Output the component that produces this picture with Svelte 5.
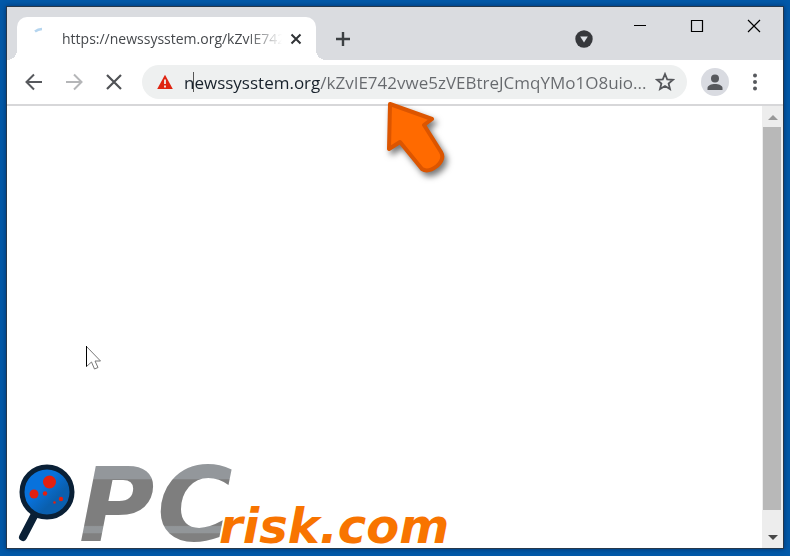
<script>
    let tabTitle = 'https://newssysstem.org/kZvIE742';
    let address = $state('newssysstem.org/kZvIE742vwe5zVEBtreJCmqYMo1O8uio...');
</script>

<div class="desktop">
    <div class="window">
        <header class="tabStrip">
            <div class="tab">
                <svg class="spinner" width="18" height="18" viewBox="0 0 18 18">
                    <path d="M4 5.5Q7 3.2 11 3" fill="none" stroke="#b5d5ef" stroke-width="2.5" />
                </svg>
                <span class="title">{tabTitle}</span>
                <button aria-label="Close tab">
                    <svg width="12" height="12" viewBox="0 0 12 12">
                        <path d="M1.5 1.5l9 9M10.5 1.5l-9 9" stroke="#303336" stroke-width="2" />
                    </svg>
                </button>
            </div>
            <button class="newTab" aria-label="New tab">
                <svg width="16" height="16" viewBox="0 0 16 16">
                    <path d="M8 1v14M1 8h14" stroke="#3c4043" stroke-width="2.4" />
                </svg>
            </button>
            <button class="tabSearch" aria-label="Search tabs">
                <svg width="18" height="18" viewBox="0 0 18 18">
                    <circle cx="9" cy="9" r="8.7" fill="#36383c" />
                    <path d="M5.2 6.5h7.6L9 12.5z" fill="#dee1e6" />
                </svg>
            </button>
            <div class="windowButtons">
                <button aria-label="Minimize">
                    <svg width="14" height="14" viewBox="0 0 14 14"><path d="M1 6.5h12" stroke="#000" /></svg>
                </button>
                <button aria-label="Maximize">
                    <svg width="14" height="14" viewBox="0 0 14 14">
                        <path d="M1.5 1.5h11v11h-11z" fill="none" stroke="#000" stroke-width="1.2" />
                    </svg>
                </button>
                <button aria-label="Close">
                    <svg width="14" height="14" viewBox="0 0 14 14">
                        <path d="M1 1l12 12M13 1L1 13" stroke="#000" stroke-width="1.2" />
                    </svg>
                </button>
            </div>
        </header>

        <nav class="toolbar">
            <div class="navButtons">
                <button aria-label="Back">
                    <svg width="18" height="18" viewBox="0 0 18 18">
                        <path d="M17 9H2M9 1.5L1.5 9 9 16.5" fill="none" stroke="#57595d" stroke-width="2" />
                    </svg>
                </button>
                <button aria-label="Forward">
                    <svg width="18" height="18" viewBox="0 0 18 18">
                        <path d="M1 9h15M9 1.5L16.5 9 9 16.5" fill="none" stroke="#b5b6b8" stroke-width="2" />
                    </svg>
                </button>
                <button aria-label="Stop">
                    <svg width="18" height="18" viewBox="0 0 18 18">
                        <path d="M2 2l14 14M16 2L2 16" stroke="#505256" stroke-width="2.2" />
                    </svg>
                </button>
            </div>
            <div class="omnibox">
                <svg width="16" height="16" viewBox="0 0 16 16">
                    <path d="M8 .8L15.8 15H.2z" fill="#df2411" />
                    <path d="M8 5.5v4.5M8 11.5v2" stroke="#eff1f1" stroke-width="1.8" />
                </svg>
                <div class="field">
                    <input type="text" aria-label="Address" spellcheck="false" bind:value={address} />
                    <i class="caret"></i>
                </div>
                <button aria-label="Bookmark this page">
                    <svg width="20" height="20" viewBox="0 0 20 20">
                        <path d="M10 2l2.2 5.3 5.8.5-4.4 3.7 1.4 5.5-5-3-5 3 1.4-5.5L2 7.8l5.8-.5z" fill="none" stroke="#55575b" stroke-width="1.8" />
                    </svg>
                </button>
            </div>
            <button aria-label="Profile">
                <svg width="28" height="28" viewBox="0 0 28 28">
                    <circle cx="14" cy="14" r="14" fill="#d9dbe1" />
                    <circle cx="14" cy="10.5" r="4" fill="#57595d" />
                    <path d="M6.5 22v-2c0-2.5 4-4 7.5-4s7.5 1.5 7.5 4v2z" fill="#57595d" />
                </svg>
            </button>
            <button aria-label="Menu">
                <svg width="16" height="20" viewBox="0 0 16 20">
                    <g fill="#57595d">
                        <circle cx="8" cy="3.5" r="2" />
                        <circle cx="8" cy="10" r="2" />
                        <circle cx="8" cy="16.5" r="2" />
                    </g>
                </svg>
            </button>
        </nav>

        <main>
            <div class="page">
                <svg class="logo" width="450" height="92" viewBox="0 0 450 92">
                    <defs>
                        <linearGradient id="steel" x1="0" y1="0" x2="0" y2="1">
                            <stop offset=".28" stop-color="#93979b" />
                            <stop offset=".29" stop-color="#7e7e7e" />
                            <stop offset=".67" stop-color="#7e7e7e" />
                            <stop offset=".68" stop-color="#929699" />
                            <stop offset=".73" stop-color="#929699" />
                            <stop offset=".74" stop-color="#808080" />
                        </linearGradient>
                        <linearGradient id="lens" x1="0" y1="0" x2="1" y2="1">
                            <stop offset=".4" stop-color="#0872dc" />
                            <stop offset=".65" stop-color="#0a5fae" />
                        </linearGradient>
                    </defs>
                    <path d="M28 58L16 81" stroke="#0a2036" stroke-width="8" stroke-linecap="round" />
                    <circle cx="40" cy="36" r="25" fill="url(#lens)" stroke="#0a2036" stroke-width="5" />
                    <g fill="#e3200f">
                        <circle cx="42.5" cy="26" r="6.5" />
                        <circle cx="27" cy="38" r="4.5" />
                        <circle cx="38" cy="37.5" r="2.2" />
                        <circle cx="54" cy="43" r="2.2" />
                        <circle cx="47.5" cy="46.5" r="1.3" />
                    </g>
                    <text class="pc" y="85"><tspan x="72">P</tspan><tspan x="150">C</tspan></text>
                    <text class="risk" x="212" y="87">risk.com</text>
                </svg>
            </div>
            <div class="scrollbar">
                <button aria-label="Scroll up">
                    <svg width="10" height="6" viewBox="0 0 10 6"><path d="M0 6l5-5 5 5z" fill="#999" /></svg>
                </button>
                <div class="track"><div class="thumb"></div></div>
                <button aria-label="Scroll down">
                    <svg width="10" height="6" viewBox="0 0 10 6"><path d="M0 0h10L5 5z" fill="#484848" /></svg>
                </button>
            </div>
        </main>

        <svg class="pointer" width="72" height="88" viewBox="0 0 72 88">
            <path d="M10 7L52 22 44 28 61 55Q65 62 57 69 48 76 42 72L20 45 9 52z" fill="#ff6a00" stroke="#dc5500" stroke-width="4" stroke-linejoin="round" />
        </svg>
        <svg class="cursor" width="18" height="26" viewBox="0 0 18 26">
            <path d="M1.5 1.5v20l5-4.5 3 7 3.5-1.5-3-6.5h5.5z" fill="#fff" stroke="#777" />
            <path d="M1.5 1v20.5" stroke="#000" />
        </svg>
    </div>
</div>

<style>
    :global(body) {
        margin: 0;
    }

    .desktop {
        background: #0259a8;
        box-sizing: border-box;
        display: flex;
        font-family: "Open Sans", "Noto Sans", sans-serif;
        min-height: 100vh;
        padding: 6px 6px 7px;
    }

    .window {
        background: #fff;
        border: 1px solid #26384b;
        box-shadow: 0 0 5px #00336c;
        display: flex;
        flex: 1;
        flex-direction: column;
        min-width: 0;
        position: relative;
    }

    button {
        align-items: center;
        background: none;
        border: 0;
        display: flex;
        justify-content: center;
        padding: 0;
    }

    svg {
        display: block;
        flex: none;
    }

    .tabStrip {
        background: #dadce0;
        display: flex;
        height: 53px;
        padding: 0 1px 0 10px;
    }

    .tab {
        align-items: center;
        align-self: flex-end;
        background: #fff;
        border-radius: 10px 10px 0 0;
        box-sizing: border-box;
        display: flex;
        height: 43px;
        padding: 0 14px;
        position: relative;
        width: 299px;
    }

    .tab::before,
    .tab::after {
        bottom: 0;
        content: '';
        height: 10px;
        position: absolute;
        width: 10px;
    }

    .tab::before {
        background: radial-gradient(circle at 0 0, transparent 10px, #fff 10px);
        left: -10px;
    }

    .tab::after {
        background: radial-gradient(circle at 100% 0, transparent 10px, #fff 10px);
        right: -10px;
    }

    .spinner {
        align-self: flex-start;
        margin-top: 9px;
    }

    .title {
        color: #45484c;
        flex: 1;
        font-size: 14px;
        line-height: 20px;
        margin: 0 8px 0 13px;
        mask-image: linear-gradient(to right, #000 185px, transparent 220px);
        overflow: hidden;
        white-space: nowrap;
    }

    .newTab {
        margin: 10px 0 0 19px;
        width: 16px;
    }

    .tabSearch {
        margin: 10px 18px 0 auto;
        width: 18px;
    }

    .windowButtons {
        display: flex;
        height: 37px;
    }

    .windowButtons button {
        width: 57px;
    }

    .toolbar {
        align-items: center;
        border-bottom: 2px solid #d7d7d9;
        display: flex;
        gap: 14px;
        height: 44px;
        padding: 0 20px 0 18px;
    }

    .navButtons {
        display: flex;
        gap: 22px;
        margin-right: 5px;
    }

    .toolbar > button:last-child {
        margin-left: 4px;
    }

    .omnibox {
        align-items: center;
        background: #eef0f0;
        border-radius: 17px;
        display: flex;
        flex: 1;
        height: 34px;
        min-width: 0;
        padding: 0 12px 0 15px;
    }

    .field {
        flex: 1;
        margin: 0 4px 0 11px;
        min-width: 0;
        position: relative;
    }

    input {
        background: linear-gradient(to right, #17212b 136px, #66696d 136px);
        background-clip: text;
        border: 0;
        box-sizing: border-box;
        color: transparent;
        display: block;
        font-family: inherit;
        font-size: 17px;
        height: 24px;
        outline: 0;
        padding: 0;
        width: 100%;
    }

    .caret {
        background: #555;
        height: 20px;
        left: 9px;
        position: absolute;
        top: 2px;
        width: 1px;
    }

    main {
        display: flex;
        flex: 1;
    }

    .page {
        align-items: flex-end;
        display: flex;
        flex: 1;
        min-width: 0;
    }

    .logo {
        overflow: visible;
    }

    .pc {
        fill: url(#steel);
        font: italic bold 103px "DejaVu Sans", sans-serif;
    }

    .risk {
        fill: #f87400;
        font: italic bold 48px "DejaVu Sans", sans-serif;
    }

    .scrollbar {
        background: #ededed;
        display: flex;
        flex-direction: column;
        width: 21px;
    }

    .scrollbar button {
        height: 21px;
    }

    .track {
        display: flex;
        flex: 1;
        flex-direction: column;
        padding: 0 2px 0 1px;
    }

    .track::after {
        content: '';
        flex: 1;
    }

    .thumb {
        background: #b8b8b8;
        flex: 22;
    }

    .pointer {
        filter: drop-shadow(3px 4px 3px #777);
        left: 373px;
        position: absolute;
        top: 90px;
    }

    .cursor {
        left: 78px;
        position: absolute;
        top: 338px;
    }
</style>
